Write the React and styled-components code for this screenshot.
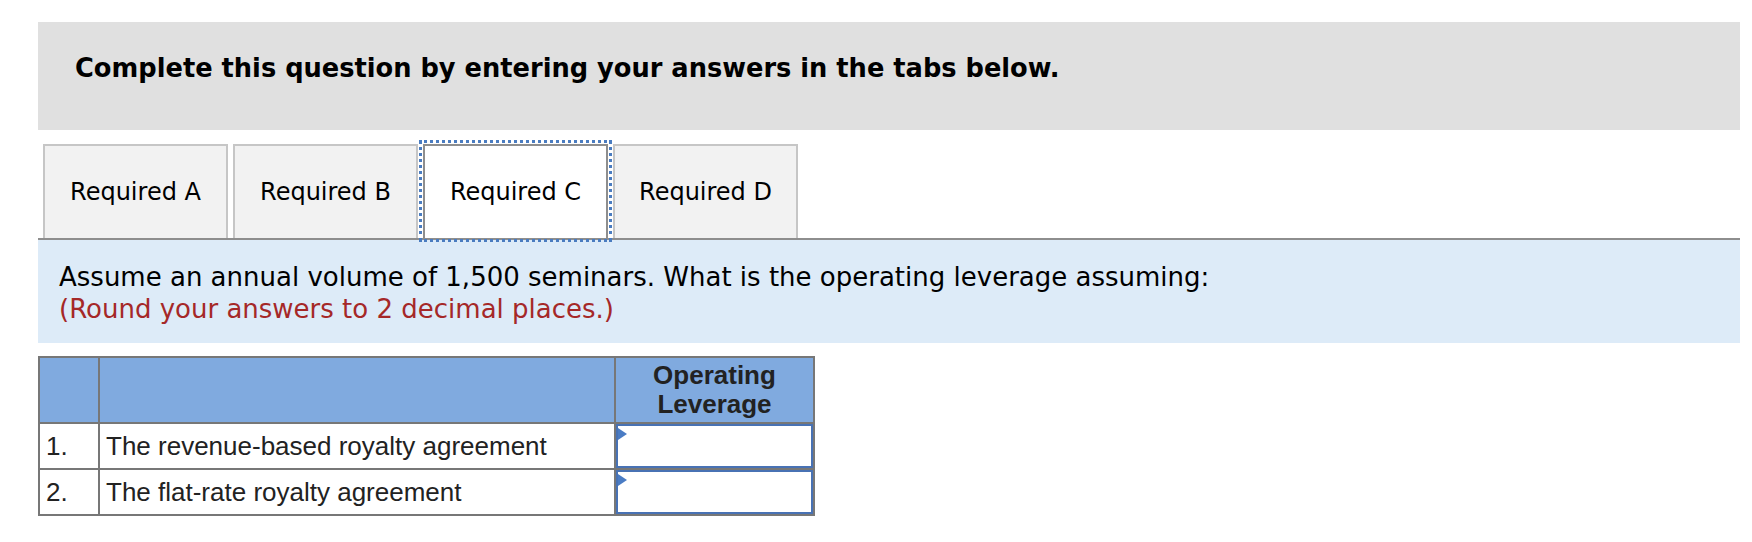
import React from 'react';
import styled, { createGlobalStyle } from 'styled-components';

const GlobalStyle = createGlobalStyle`
  body {
    margin: 0;
    background: #ffffff;
    font-family: "DejaVu Sans", Verdana, sans-serif;
    color: #000000;
  }
`;

const Page = styled.div`
  padding: 22px 12px 0 38px;
`;

const Banner = styled.div`
  background-color: #e0e0e0;
  height: 108px;
  box-sizing: border-box;
  padding: 31px 0 0 37px;
`;

const Heading = styled.h2`
  margin: 0;
  font-size: 25.7px;
  line-height: 30px;
  font-weight: bold;
`;

const TabStrip = styled.div`
  display: flex;
  gap: 5px;
  margin-top: 14px;
  padding-left: 5px;
  border-bottom: 2px solid #8e8e8e;
`;

const Tab = styled.button`
  position: relative;
  z-index: ${({ active }) => (active ? 1 : 0)};
  width: 185px;
  height: 94px;
  box-sizing: border-box;
  border: 2px solid ${({ active }) => (active ? '#8e8e8e' : '#c6c6c6')};
  border-bottom: none;
  background-color: ${({ active }) => (active ? '#ffffff' : '#f2f2f2')};
  outline: ${({ active }) => (active ? '3px dotted #4a7cc0' : 'none')};
  outline-offset: 1px;
  font-family: "DejaVu Sans", Verdana, sans-serif;
  font-size: 24px;
  color: #000000;
  padding: 0;
  cursor: pointer;
`;

const Prompt = styled.div`
  background-color: #ddebf8;
  padding: 21px 0 18px 21px;
  font-size: 26px;
  line-height: 32px;
`;

const Note = styled.div`
  color: #a52828;
`;

const Grid = styled.div`
  display: grid;
  grid-template-columns: 58px 514px 197px;
  grid-template-rows: 64px 44px 44px;
  gap: 2px;
  padding: 2px;
  width: max-content;
  margin-top: 13px;
  background-color: #777777;
  font-family: "Liberation Sans", Arial, sans-serif;
  font-size: 26px;
  line-height: 29px;
  color: #222222;
`;

const HeadCell = styled.div`
  background-color: #80aadf;
  display: flex;
  align-items: center;
  justify-content: center;
  text-align: center;
  font-weight: bold;
`;

const Cell = styled.div`
  background-color: #ffffff;
  display: flex;
  align-items: center;
  padding-left: 6px;
`;

const AnswerCell = styled.div`
  position: relative;
  background-color: #ffffff;
  border: 2px solid #4872b4;
  box-sizing: border-box;
`;

const Marker = styled.span`
  position: absolute;
  top: 2px;
  left: 0;
  width: 0;
  height: 0;
  border-top: 6px solid transparent;
  border-bottom: 6px solid transparent;
  border-left: 9px solid #4a7cc4;
`;

const tabs = ['Required A', 'Required B', 'Required C', 'Required D'];

const rows = [
  { no: '1.', label: 'The revenue-based royalty agreement' },
  { no: '2.', label: 'The flat-rate royalty agreement' },
];

const App = () => {
  return (
    <>
      <GlobalStyle />
      <Page>
        <Banner>
          <Heading>Complete this question by entering your answers in the tabs below.</Heading>
        </Banner>
        <TabStrip>
          {tabs.map((t) => (
            <Tab key={t} active={t === 'Required C'}>
              {t}
            </Tab>
          ))}
        </TabStrip>
        <Prompt>
          <div>Assume an annual volume of 1,500 seminars. What is the operating leverage assuming:</div>
          <Note>(Round your answers to 2 decimal places.)</Note>
        </Prompt>
        <Grid>
          <HeadCell />
          <HeadCell />
          <HeadCell>
            Operating
            <br />
            Leverage
          </HeadCell>
          {rows.map((r) => (
            <React.Fragment key={r.no}>
              <Cell>{r.no}</Cell>
              <Cell>{r.label}</Cell>
              <AnswerCell>
                <Marker />
              </AnswerCell>
            </React.Fragment>
          ))}
        </Grid>
      </Page>
    </>
  );
};

export default App;
